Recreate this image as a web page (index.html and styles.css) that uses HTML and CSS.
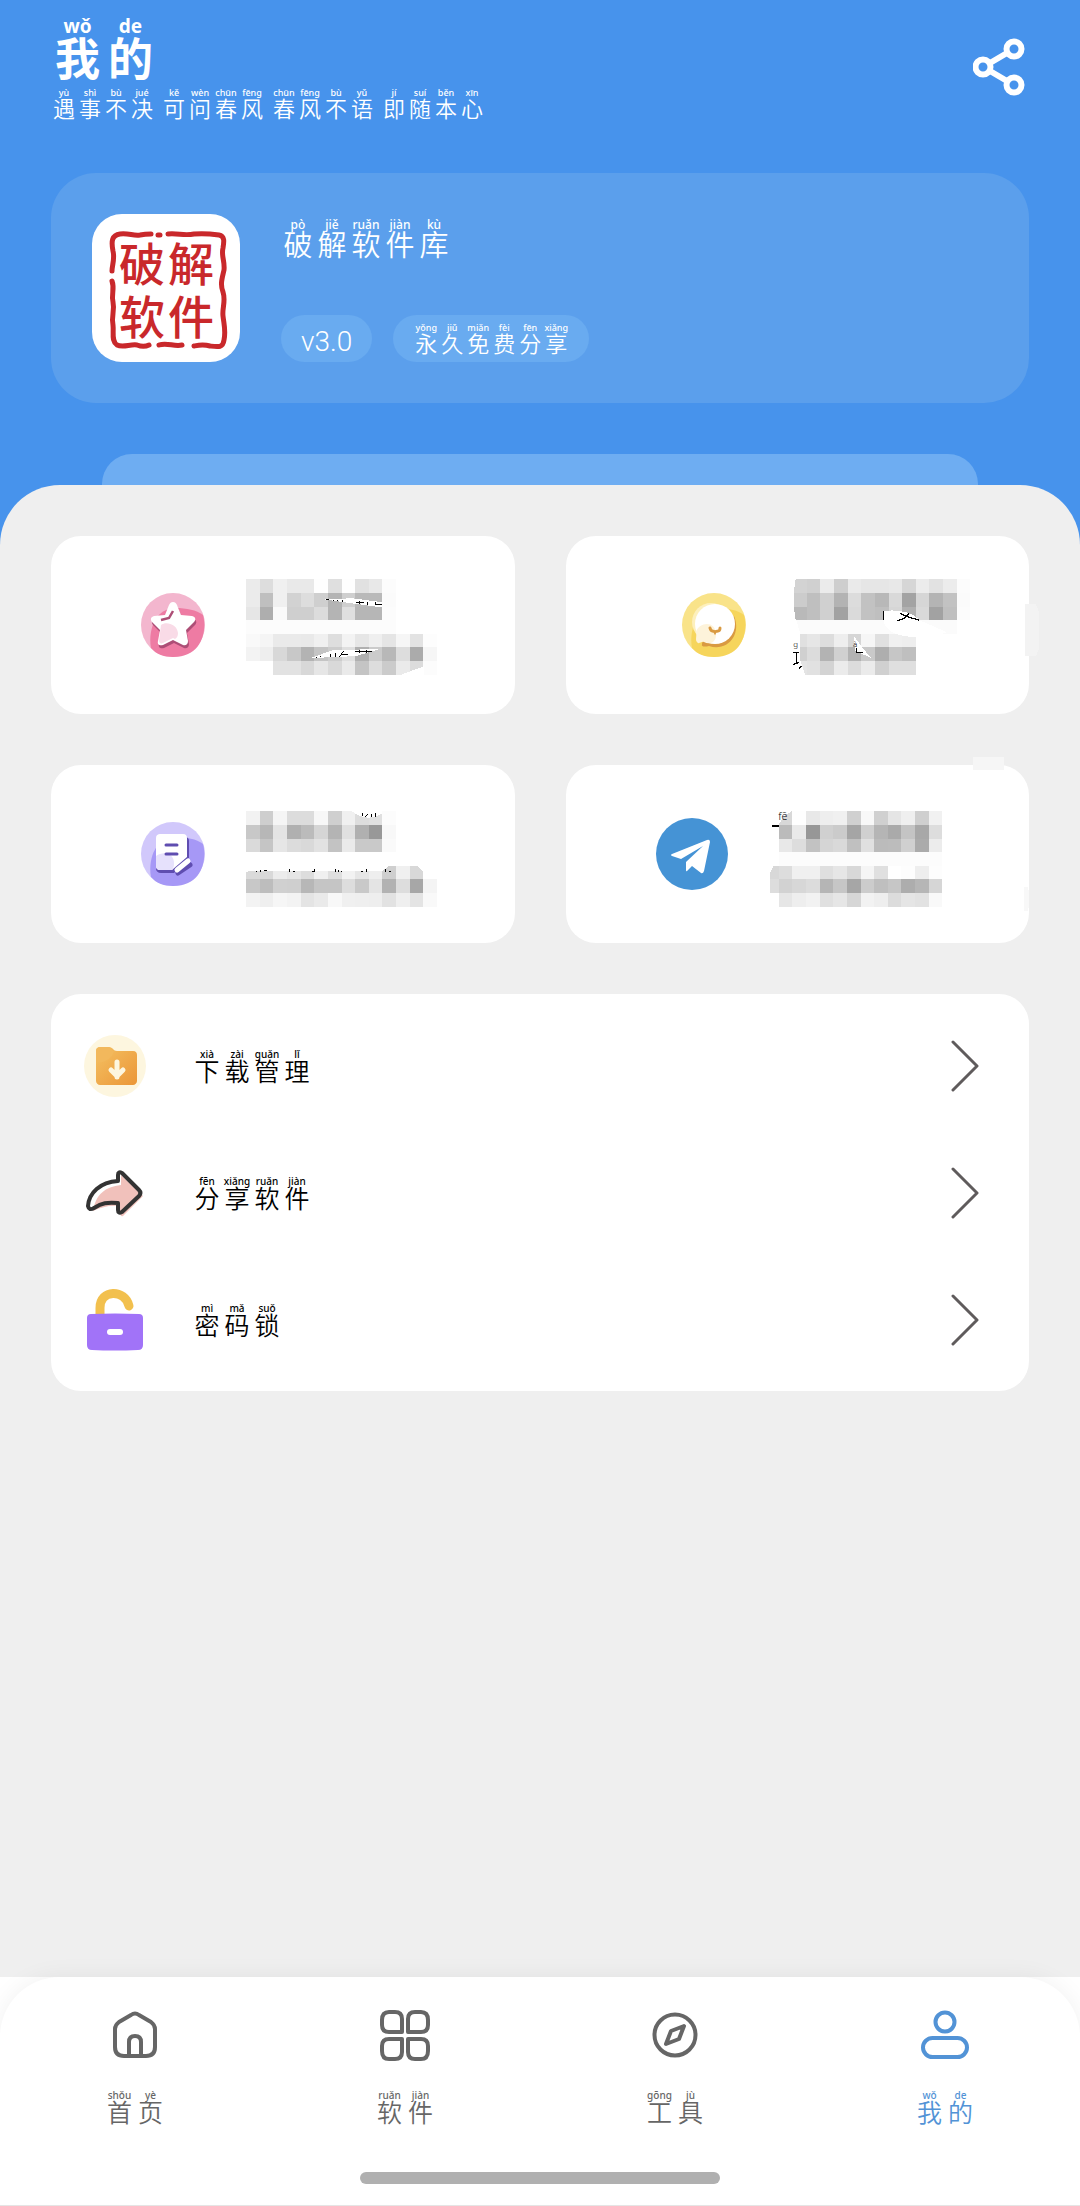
FILE: index.html
```html
<!DOCTYPE html>
<html lang="zh-CN">
<head>
    <meta charset="UTF-8">
    <meta name="viewport" content="width=device-width, initial-scale=1.0">
    <title>我的</title>
    <link rel="stylesheet" href="styles.css">
</head>
<body>

<!-- Header -->
<header class="header">
    <div class="header-top">
        <div>
            <h1 class="pinyin title"><ruby>我<rt>wǒ</rt></ruby><ruby>的<rt>de</rt></ruby></h1>
            <p class="pinyin subtitle">
                <span class="word"><ruby>遇<rt>yù</rt></ruby><ruby>事<rt>shì</rt></ruby><ruby>不<rt>bù</rt></ruby><ruby>决<rt>jué</rt></ruby></span>
                <span class="word"><ruby>可<rt>kě</rt></ruby><ruby>问<rt>wèn</rt></ruby><ruby>春<rt>chūn</rt></ruby><ruby>风<rt>fēng</rt></ruby></span>
                <span class="word"><ruby>春<rt>chūn</rt></ruby><ruby>风<rt>fēng</rt></ruby><ruby>不<rt>bù</rt></ruby><ruby>语<rt>yǔ</rt></ruby></span>
                <span class="word"><ruby>即<rt>jí</rt></ruby><ruby>随<rt>suí</rt></ruby><ruby>本<rt>běn</rt></ruby><ruby>心<rt>xīn</rt></ruby></span>
            </p>
        </div>
        <button class="share-btn" type="button" aria-label="分享">
            <svg viewBox="0 0 52 58" width="52" height="58" fill="none" stroke="#fff" stroke-width="6">
                <path d="M17 25 34 15M17 33 34 43"/>
                <circle cx="10" cy="29" r="7.5"/>
                <circle cx="41" cy="11" r="7.5"/>
                <circle cx="41" cy="47" r="7.5"/>
            </svg>
        </button>
    </div>

    <!-- App card -->
    <section class="profile">
        <svg class="logo" viewBox="0 0 148 148">
            <g fill="none" stroke="#c9282b" stroke-width="5" stroke-linecap="round" stroke-linejoin="round">
                <path d="M20 57c0-6 3-12 1-20-2-10-1-16 7-17 9-1 13 2 20 1 5-1 8-1 11-1"/>
                <path d="M66 21h2M76 20c10-1 16 2 26 0 10-1 18 0 25 1 6 1 5 7 4 13-2 8 2 13 1 22-2 9-4 14-1 22 3 9-1 16 0 24 1 9 3 15 1 24-1 8-6 7-14 6-7-2-11-1-16 0"/>
                <path d="M20 67c3 8-1 13 1 21 2 9-2 14 0 23 1 8-2 16 4 20 6 3 13-1 20 0 5 2 8 2 12 0M67 131c8-3 15 2 23 0"/>
            </g>
            <g fill="#c9282b" class="logo-text">
                <text x="27" y="67">破</text>
                <text x="76" y="67">解</text>
                <text x="27" y="120">软</text>
                <text x="76" y="120">件</text>
            </g>
        </svg>
        <div class="profile-info">
            <h2 class="pinyin app-name"><ruby>破<rt>pò</rt></ruby><ruby>解<rt>jiě</rt></ruby><ruby>软<rt>ruǎn</rt></ruby><ruby>件<rt>jiàn</rt></ruby><ruby>库<rt>kù</rt></ruby></h2>
            <div class="tags">
                <span class="tag version">v3.0</span>
                <span class="tag pinyin"><ruby>永<rt>yǒng</rt></ruby><ruby>久<rt>jiǔ</rt></ruby><ruby>免<rt>miǎn</rt></ruby><ruby>费<rt>fèi</rt></ruby><ruby>分<rt>fēn</rt></ruby><ruby>享<rt>xiǎng</rt></ruby></span>
            </div>
        </div>
    </section>
    <div class="peek"></div>
</header>

<main class="sheet">
    <!-- Shortcut cards, labels are censored -->
    <div class="shortcuts">
        <a class="shortcut" href="#favorites" aria-label="收藏">
            <svg viewBox="0 0 64 64" width="64" height="64">
                <circle cx="32" cy="32" r="32" fill="#f3b6ce"/>
                <path d="M10 55C7 39 13 16 34 15c12 0 21 2 28 7 4 14 0 42-30 42-10 0-17-3-22-9z" fill="#ee7ba3"/>
                <path d="M33 12c2 0 3 1 4 3l4 10 11 1c4 1 4 4 2 6l-8 8 2 11c0 4-3 5-5 4l-10-5-10 5c-3 1-6 0-5-4l2-11-8-8c-2-3-1-5 2-6l11-1 4-10c1-2 2-3 4-3z" fill="#ad4e76"/>
                <path d="M32 9c2 0 3 1 4 3l4 10 11 1c4 1 4 4 2 6l-8 8 2 11c0 4-3 5-5 4l-10-5-10 5c-3 1-6 0-5-4l2-11-8-8c-2-3-1-5 2-6l11-1 4-10c1-2 2-3 4-3z" fill="#fff"/>
                <path d="M18 48l2-16c5-4 16-1 17 8 0 3-1 5-3 6l-2-1-10 5c-2 1-4 0-4-2z" fill="#f9dbe7"/>
                <path d="M20 27l8-2 4-7" fill="none" stroke="#ad4e76" stroke-width="2.5"/>
            </svg>
            <svg class="mosaic" data-mosaic="favorites" viewBox="0 -6 574 287">
                <g class="scraps">
                    <path d="M237 61l80-4 93 12v16z" fill="#fff"/>
                    <path d="M240 61h8M262 62v3M274 62v4M290 63v4M332 70h24M342 65v10M366 67v9M388 67v10M388 76h22" stroke="#000" stroke-width="3"/>
                    <path d="M195 236l65-22 145-5-75 22-135 6z" fill="#fff"/>
                    <path d="M212 233v4M224 231v4M255 224v10M270 221v12M281 233l12-18M288 226h20M328 217h52M342 212v10M362 212v9" stroke="#000" stroke-width="3"/>
                    <path d="M0 246h82v45H0zM466 287l70-26v30z" fill="#fff"/>
                </g>
            </svg>
        </a>
        <a class="shortcut shortcut-chat" href="#feedback" aria-label="反馈">
            <svg viewBox="0 0 64 64" width="64" height="64">
                <circle cx="32" cy="32" r="32" fill="#f9e389"/>
                <path d="M10 55C7 39 13 16 34 15c12 0 21 2 28 7 4 14 0 42-30 42-10 0-17-3-22-9z" fill="#f6d55c"/>
                <circle cx="29" cy="29" r="19" fill="#fdf0bd"/>
                <path d="M52 23c8 19-7 36-25 30-4 1-8 1-7-2 0-4 4-2 7-2z" fill="#d99a42"/>
                <circle cx="33" cy="31" r="20" fill="#fff"/>
                <path d="M15 49c-2-2 0-6-1-10 3-10 20-12 20 3 0 8-7 10-12 7-3-1-5 3-7 0z" fill="#fdf3da"/>
                <path d="M28 35c1 5 4 2 5 4 1-2 5 1 5-4" fill="none" stroke="#d99a42" stroke-width="3" stroke-linecap="round"/>
            </svg>
            <svg class="mosaic" data-mosaic="feedback" viewBox="0 -6 574 287">
                <g class="scraps">
                    <path d="M0 0h8Q-4 60 8 123H0zM0 123h10l12 41v80l14 43H0z" fill="#fff"/>
                    <path d="M272 96c20-4 80-6 110 28l80 35c-40 20-180 30-190-35z" fill="#fff"/>
                    <path d="M271 96v27M324 102c8 12 40 14 56 22M348 102c-6 12-20 20-35 22" fill="none" stroke="#000" stroke-width="4"/>
                    <path d="M182 170l30 40 22 26-46-20z" fill="#fff"/>
                    <path d="M190 207v12h20" fill="none" stroke="#000" stroke-width="3"/>
                    <path d="M0 220h18M11 220v32M0 256l18-6M17 268l8-8" fill="none" stroke="#000" stroke-width="4"/>
                    <text x="1" y="203" font-size="24">g</text>
                    <text x="180" y="203" font-size="24">à</text>
                    <path d="M696 75h34l8 20v116l-8 21h-34z" fill="#f3f3f3"/>
                </g>
            </svg>
        </a>
        <a class="shortcut" href="#log" aria-label="记录">
            <svg viewBox="0 0 64 64" width="64" height="64">
                <circle cx="32" cy="32" r="32" fill="#d1c8fb"/>
                <path d="M10 55C7 39 13 16 34 15c12 0 21 2 28 7 4 14 0 42-30 42-10 0-17-3-22-9z" fill="#a698f6"/>
                <path d="M20 15h24c3 0 4 2 4 4v17L33 51H20c-3 0-5-2-5-4z" fill="#5f4db0"/>
                <path d="M19 12h23c3 0 4 2 4 4v19L31 48H19c-3 0-4-2-4-4V16c0-3 2-4 4-4z" fill="#fff"/>
                <path d="M15 34c8-6 19-2 18 8 0 3-1 4-2 6H19c-3 0-4-2-4-4z" fill="#e6e1fc"/>
                <path d="M25 23h11M25 32h11" stroke="#5f4db0" stroke-width="3" stroke-linecap="round"/>
                <path d="M37 51l12-8" stroke="#5f4db0" stroke-width="5" stroke-linecap="round"/>
                <path d="M36 48l11-9" stroke="#fff" stroke-width="5" stroke-linecap="round"/>
            </svg>
            <svg class="mosaic" data-mosaic="log" viewBox="0 -15 574 287">
                <g class="scraps">
                    <path d="M318 0q45 35 92 6V0z" fill="#fff"/>
                    <path d="M350 4v10M358 16l8-8M378 8v8M388 4v14" stroke="#000" stroke-width="3"/>
                    <path d="M0 164h430l-20 16H10l-10 4zM515 164h20v20z" fill="#fff"/>
                    <path d="M30 180h3M45 176v6M54 178h8M130 175v7M140 180h8M198 180h5M207 175v7M268 175v7M278 177v5M288 180v2M346 180h6M362 175v7M420 175v7M430 180h6" stroke="#000" stroke-width="3"/>
                </g>
            </svg>
        </a>
        <a class="shortcut" href="#telegram" aria-label="Telegram">
            <svg viewBox="0 0 72 72" width="72" height="72">
                <circle cx="36" cy="36" r="36" fill="#4593d5"/>
                <path d="M16 36 51 22q3-1 3 2L48 53q-1 3-3 2L36 48l-5 5q-1 1-1-1V44L47 28 25 41l-9-3q-2-1 0-2z" fill="#fff"/>
            </svg>
            <svg class="mosaic mosaic-telegram" data-mosaic="telegram" viewBox="0 -15 574 287">
                <g class="scraps">
                    <path d="M0 160h14v86H0zM14 160h14l-14 26zM41 0h40L60 12 41 40z" fill="#fff"/>
                    <path d="M20 45h22" stroke="#000" stroke-width="5"/>
                    <text x="40" y="27" font-size="32">fē</text>
                    <path d="M625-164h93v41h-93z" fill="#f6f6f6"/>
                    <path d="M778 228h12q10 36 0 72h-12z" fill="#f8f8f8"/>
                </g>
            </svg>
        </a>
    </div>

    <!-- Menu -->
    <nav class="menu">
        <a class="menu-item" href="#downloads">
            <svg viewBox="0 0 64 64" width="64" height="64">
                <defs>
                    <linearGradient id="folder" x1="0" y1="0" x2="1" y2="1">
                        <stop offset="0" stop-color="#f4c163"/>
                        <stop offset="1" stop-color="#eb9637"/>
                    </linearGradient>
                </defs>
                <circle cx="32" cy="32" r="31" fill="#fdf6df"/>
                <path d="M17 13h9c4 0 4 4 8 4h16c3 0 4 2 4 4v26c0 2-2 4-4 4H17c-2 0-4-2-4-4V17c0-3 2-4 4-4z" fill="url(#folder)"/>
                <path d="M13 28c7 2 16-3 18-11-2 0-3-4-6-4h-8c-2 0-4 1-4 4z" fill="#f2b85c"/>
                <path d="M34 28v15M28 36l6 6 6-6" fill="none" stroke="#fdf6df" stroke-width="5" stroke-linecap="round" stroke-linejoin="round"/>
            </svg>
            <span class="pinyin"><ruby>下<rt>xià</rt></ruby><ruby>载<rt>zài</rt></ruby><ruby>管<rt>guǎn</rt></ruby><ruby>理<rt>lǐ</rt></ruby></span>
            <svg class="arrow" viewBox="0 0 28 52"><path d="M2 2 26 26 2 50"/></svg>
        </a>
        <a class="menu-item" href="#share">
            <svg viewBox="0 0 64 64" width="64" height="64">
                <path d="M10 50c3-17 12-24 28-26V14l22 21-20 20c-3 1-3-2-3-10-11-1-18 1-27 5z" fill="#f1c1bb"/>
                <path d="M5 45c1-13 12-24 30-25v-6q0-4 4-2l17 17q3 3 0 6L39 51q-4 2-4-2v-7c-11-1-16 0-24 5q-5 3-6-2z" fill="none" stroke="#333" stroke-width="4" stroke-linejoin="round"/>
            </svg>
            <span class="pinyin"><ruby>分<rt>fēn</rt></ruby><ruby>享<rt>xiǎng</rt></ruby><ruby>软<rt>ruǎn</rt></ruby><ruby>件<rt>jiàn</rt></ruby></span>
            <svg class="arrow" viewBox="0 0 28 52"><path d="M2 2 26 26 2 50"/></svg>
        </a>
        <a class="menu-item" href="#lock">
            <svg viewBox="0 0 64 64" width="64" height="64">
                <path d="M17 30V20C17 1 42 1 46 18" fill="none" stroke="#f2c04e" stroke-width="9" stroke-linecap="round"/>
                <path d="M8 26q24-1 48 0 4 0 4 4v27q0 5-5 5-24 1-46 0-5 0-5-5V30q0-4 4-4z" fill="#a173f8"/>
                <path d="M27 44h10" stroke="#fff" stroke-width="6" stroke-linecap="round"/>
            </svg>
            <span class="pinyin"><ruby>密<rt>mì</rt></ruby><ruby>码<rt>mǎ</rt></ruby><ruby>锁<rt>suǒ</rt></ruby></span>
            <svg class="arrow" viewBox="0 0 28 52"><path d="M2 2 26 26 2 50"/></svg>
        </a>
    </nav>
</main>

<!-- Bottom tab bar -->
<footer class="footer">
    <div class="tabbar">
        <nav class="tabs">
            <a class="tab" href="#home">
                <svg viewBox="0 0 54 54" width="54" height="54">
                    <path d="M23 6 11 13Q7 16 7 20v18q0 9 9 9h22q9 0 9-9V20q0-4-4-7L31 6q-4-3-8 0z"/>
                    <path d="M21 47V33q0-6 6-6t6 6v14"/>
                </svg>
                <span class="pinyin"><ruby>首<rt>shǒu</rt></ruby><ruby>页<rt>yè</rt></ruby></span>
            </a>
            <a class="tab" href="#apps">
                <svg viewBox="0 0 54 54" width="54" height="54">
                    <path d="M24 23H11q-7 0-7-7v-5q0-8 7-8h6q7 0 7 7zM30 23h13q7 0 7-7v-5q0-8-7-8h-6q-7 0-7 7zM24 30H11q-7 0-7 7v5q0 8 7 8h6q7 0 7-7zM30 30h13q7 0 7 7v5q0 8-7 8h-6q-7 0-7-7z"/>
                </svg>
                <span class="pinyin"><ruby>软<rt>ruǎn</rt></ruby><ruby>件<rt>jiàn</rt></ruby></span>
            </a>
            <a class="tab" href="#tools">
                <svg viewBox="0 0 54 54" width="54" height="54">
                    <circle cx="27" cy="26" r="20.5"/>
                    <path d="M36 17 23 22 18 35 31 30z"/>
                </svg>
                <span class="pinyin"><ruby>工<rt>gōng</rt></ruby><ruby>具<rt>jù</rt></ruby></span>
            </a>
            <a class="tab active" href="#me">
                <svg viewBox="0 0 54 54" width="54" height="54">
                    <circle cx="27" cy="13" r="9.5"/>
                    <rect x="5" y="29" width="44" height="19" rx="9.5"/>
                </svg>
                <span class="pinyin"><ruby>我<rt>wǒ</rt></ruby><ruby>的<rt>de</rt></ruby></span>
            </a>
        </nav>
        <div class="home-indicator"></div>
    </div>
</footer>

<script>
    // Two hex digits per block = grey level, ".." = empty
    const mosaics = {
        favorites: [
            'ebddf0e9e9fedffee1e8fc',
            'ebbff0d2ddcfb4cfb9b9fb',
            'e6aefacfcfdcb4dfb6b6fc',
            'fcfcfcfcfcfcfcfcfcfcfc',
            'f9f5eaeae9f0def3e6efe5f6e3fd',
            'f3eed8c8b3c4cddfb0cbb8ddabf6',
            '....e2e2d8e6d9eac4ddcbeadcfc'
        ],
        feedback: [
            'd3d0ebceeae6e6e8d6ece2ecfc',
            'ccbfd0b3dcc2b8d9a3d6b4c2fb',
            'b9bfd0a2dac2bfd6b0d9a2bffc',
            'fbfbfbfbfbfbfbfbfbfbfbfb',
            'e0e6ddeed6f6e0f0ee',
            'd0dcb3d0b3c9aec6bf',
            'e4e1d3ebdcebd0dfdf'
        ],
        log: [
            'f2cef5dcdcf7cff0dde0fc',
            'c8b7e4b0bbd5b4e0b098f8',
            'dac5e6dcd9e2c3eac9c9fa',
            '',
            'dad9ece6ddf0dff2e6eecff0d8',
            'c8bdd0cfb7c5c5ddc9e4b2dda7f4',
            'f3eff6f3e4eaf8f0efeee2efe4f9'
        ],
        telegram: [
            '..d8fee8eef0d0f8d0e5efcff1',
            '..bbe997d0cba5d0b5aac4a8dd',
            '..e8ddc2d5d9c0e0bbbcd0abec',
            '..fcfcfcfcfcfcfcfcfcfcfcfc',
            'd8ddf0f0dfe6d8f5e0fffdeefd',
            'ddd2d7dcb5c6a6ccbfc6adb6d6',
            '..e6eef2e0e6d6f2eedce5e2f9'
        ]
    };
    const cell = 41;

    document.querySelectorAll('.mosaic').forEach(svg => {
        const scraps = svg.querySelector('.scraps');
        mosaics[svg.dataset.mosaic].forEach((row, y) => {
            (row.match(/../g) || []).forEach((level, x) => {
                if (level === '..') return;
                const rect = document.createElementNS('http://www.w3.org/2000/svg', 'rect');
                rect.setAttribute('x', x * cell);
                rect.setAttribute('y', y * cell);
                rect.setAttribute('width', cell);
                rect.setAttribute('height', cell);
                rect.setAttribute('fill', '#' + level + level + level);
                svg.insertBefore(rect, scraps);
            });
        });
    });
</script>
</body>
</html>
```
FILE: styles.css
```css
* {
    box-sizing: border-box;
}

body {
    margin: 0;
    min-height: 100vh;
    display: flex;
    flex-direction: column;
    background-color: #4793ec;
    font-family: "Noto Sans", "Noto Sans CJK SC", sans-serif;
    font-weight: 350;
}

h1, h2, p {
    margin: 0;
    font-weight: 350;
}

a {
    color: inherit;
    text-decoration: none;
}

svg {
    display: block;
    flex-shrink: 0;
}

/* Characters with pinyin on top */
.pinyin {
    display: flex;
    align-items: flex-start;
    font-family: "Noto Sans CJK SC", sans-serif;
    font-size: 25px;
    line-height: 26px;
}

.pinyin ruby {
    display: flex;
    flex-direction: column-reverse;
    align-items: center;
    width: 30px;
    white-space: nowrap;
}

.pinyin rt {
    margin-bottom: -2px;
    font-family: "Noto Sans", sans-serif;
    font-size: 10px;
    font-weight: 500;
    line-height: 10px;
}

/* Header */
.header {
    padding: 16px 51px 0;
    color: white;
}

.header-top {
    display: flex;
    justify-content: space-between;
    align-items: flex-start;
}

.pinyin.title {
    font-size: 45px;
    line-height: 45px;
    font-weight: 700;
}

.title ruby {
    width: 53px;
}

.title rt {
    font-size: 19px;
    font-weight: 700;
    line-height: 20px;
}

.pinyin.subtitle {
    gap: 6px;
    margin-top: 9px;
    font-size: 22px;
    line-height: 22px;
}

.word {
    display: flex;
}

.subtitle ruby,
.tag ruby {
    width: 26px;
}

.subtitle rt,
.tag rt {
    font-size: 9px;
}

.share-btn {
    margin: 22px 4px 0 0;
    padding: 0;
    border: 0;
    background: none;
    cursor: pointer;
}

/* App card */
.profile {
    display: flex;
    gap: 41px;
    margin-top: 55px;
    padding: 41px;
    border-radius: 45px;
    background-color: #5b9fec;
}

.logo {
    width: 148px;
    height: 148px;
    border-radius: 30px;
    background-color: white;
}

.logo-text {
    font-family: "Noto Sans CJK SC", sans-serif;
    font-size: 46px;
    font-weight: 500;
}

.profile-info {
    display: flex;
    flex-direction: column;
    justify-content: space-between;
    padding-top: 5px;
}

.pinyin.app-name {
    font-size: 29px;
    line-height: 30px;
}

.app-name ruby {
    width: 34px;
}

.app-name rt {
    font-size: 12px;
    line-height: 11px;
}

.tags {
    display: flex;
    gap: 21px;
}

.tag {
    height: 47px;
    padding: 8px 20px 0;
    border-radius: 24px;
    background-color: #69abf0;
}

.tag.pinyin {
    font-size: 22px;
    line-height: 22px;
}

.version {
    font-family: Roboto, sans-serif;
    font-size: 28px;
    line-height: 38px;
}

.peek {
    height: 31px;
    margin: 51px 51px 0;
    border-radius: 30px 30px 0 0;
    background-color: #6eadf2;
}

/* Grey sheet */
.sheet {
    flex: 1;
    display: flex;
    flex-direction: column;
    gap: 51px;
    padding: 51px;
    border-radius: 60px 60px 0 0;
    background-color: #efefef;
}

.shortcuts {
    display: grid;
    grid-template-columns: 1fr 1fr;
    gap: 51px;
}

.shortcut {
    display: flex;
    align-items: center;
    gap: 41px;
    height: 178px;
    padding-left: 90px;
    border-radius: 30px;
    background-color: white;
}

.shortcut-chat {
    padding-left: 116px;
    gap: 47px;
}

.mosaic {
    width: 191px;
    height: 96px;
    overflow: visible;
    font-family: "Noto Sans", sans-serif;
    shape-rendering: crispEdges;
}

.mosaic-telegram {
    margin-left: -4px;
}

/* Menu */
.menu {
    padding: 8px 0;
    border-radius: 30px;
    background-color: white;
}

.menu-item {
    display: flex;
    align-items: center;
    height: 127px;
    padding: 0 50px 0 32px;
    color: black;
}

.menu-item .pinyin {
    margin-left: 45px;
}

.arrow {
    width: 28px;
    height: 52px;
    margin-left: auto;
    fill: none;
    stroke: #5f5b5c;
    stroke-width: 3;
    stroke-linecap: round;
    stroke-linejoin: round;
}

/* Bottom tab bar */
.footer {
    background-color: white;
}

.tabbar {
    padding: 32px 0 21px;
    border-bottom: 1px solid #e5e5e5;
    border-radius: 60px 60px 0 0;
    background-color: white;
    box-shadow: 0 0 24px rgba(0, 0, 0, 0.06);
}

.tabs {
    display: grid;
    grid-template-columns: repeat(4, 1fr);
}

.tab {
    display: flex;
    flex-direction: column;
    align-items: center;
    gap: 27px;
    color: #666;
}

.tab svg {
    fill: none;
    stroke: currentColor;
    stroke-width: 4;
    stroke-linejoin: round;
}

.tab ruby {
    width: 31px;
}

.tab.active {
    color: #5293d6;
}

.home-indicator {
    width: calc(100% / 3);
    height: 12px;
    margin: 48px auto 0;
    border-radius: 6px;
    background-color: #b0b0b0;
}
```
